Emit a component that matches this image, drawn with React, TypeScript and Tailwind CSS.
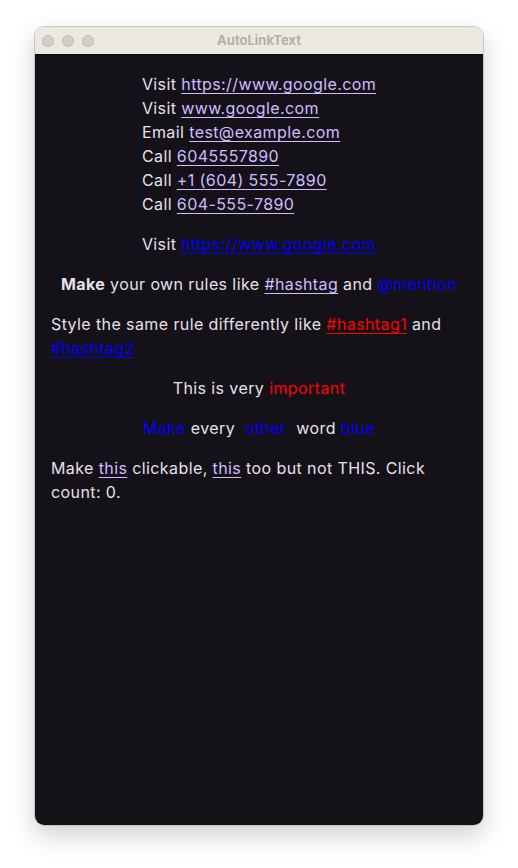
import { useState } from 'react';

const link = 'text-[#d0bcff] underline underline-offset-[3px] decoration-1';
const blue = 'text-[#0000ff]';
const red = 'text-[#ff0000]';

export default function App() {
  const [count, setCount] = useState(0);

  return (
    <div className="w-[518px] h-[868px] bg-white pt-[26px] pl-[34px] font-['Inter','Noto_Sans',sans-serif]">
      <div className="w-[450px] h-[800px] rounded-[10px] overflow-hidden border border-[#c9c6c0] shadow-[0_10px_24px_rgba(0,0,0,0.18)] flex flex-col">
        {/* title bar */}
        <div className="h-[28px] bg-[#ece9e3] flex items-center relative shrink-0 border-b border-[#0a0a0a]">
          <div className="flex gap-[8px] pl-[7px]">
            <span className="w-[12px] h-[12px] rounded-full bg-[#d3cfc8] border border-[#bfbbb4]" />
            <span className="w-[12px] h-[12px] rounded-full bg-[#d3cfc8] border border-[#bfbbb4]" />
            <span className="w-[12px] h-[12px] rounded-full bg-[#d3cfc8] border border-[#bfbbb4]" />
          </div>
          <div className="absolute inset-0 flex items-center justify-center text-[13px] font-bold text-[#b3afa9]">
            AutoLinkText
          </div>
        </div>

        {/* content */}
        <div className="flex-1 bg-[#141218] text-[#e6e0e9] text-[16px] leading-[24px] tracking-[0.4px] px-[16px] pt-[17px] flex flex-col gap-[16px]">
          <div className="text-center">
            <p className="inline-block text-left">
              Visit <span className={link}>https://www.google.com</span>
              <br />
              Visit <span className={link}>www.google.com</span>
              <br />
              Email <span className={link}>test@example.com</span>
              <br />
              Call <span className={link}>6045557890</span>
              <br />
              Call <span className={link}>+1 (604) 555-7890</span>
              <br />
              Call <span className={link}>604-555-7890</span>
            </p>
          </div>

          <p className="text-center">
            Visit <span className={`${blue} underline underline-offset-[3px]`}>https://www.google.com</span>
          </p>

          <p className="text-center">
            <b>Make</b> your own rules like <span className={link}>#hashtag</span> and{' '}
            <span className={blue}>@mention</span>
          </p>

          <p>
            Style the same rule differently like{' '}
            <span className={`${red} underline underline-offset-[3px]`}>#hashtag1</span> and
            <br />
            <span className={`${blue} underline underline-offset-[3px]`}>#hashtag2</span>
          </p>

          <p className="text-center">
            This is very <span className={red}>important</span>
          </p>

          <p className="text-center whitespace-pre">
            <span className={blue}>Make</span> every  <span className={blue}>other</span>  word{' '}
            <span className={blue}>blue</span>
          </p>

          <p>
            Make{' '}
            <span className={`${link} cursor-pointer`} onClick={() => setCount(count + 1)}>
              this
            </span>{' '}
            clickable,{' '}
            <span className={`${link} cursor-pointer`} onClick={() => setCount(count + 1)}>
              this
            </span>{' '}
            too but not THIS. Click
            <br />
            count: {count}.
          </p>
        </div>
      </div>
    </div>
  );
}
